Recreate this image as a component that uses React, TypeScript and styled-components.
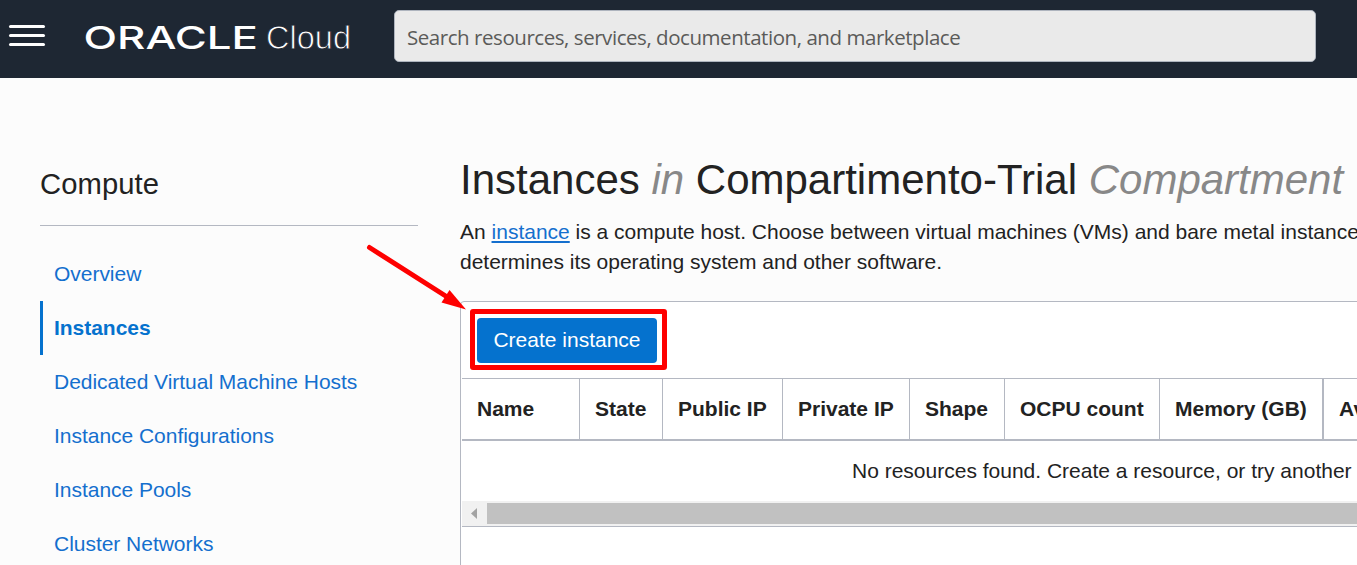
import React from "react";
import styled, { createGlobalStyle } from "styled-components";

const GlobalStyle = createGlobalStyle`
  * { box-sizing: border-box; }
  html, body { margin: 0; height: 100%; overflow: hidden; }
  body {
    background: #fcfcfc;
    color: #222;
    font: 21px/30px "Liberation Sans", Arial, sans-serif;
    white-space: nowrap;
  }
`;

const Page = styled.div`
  position: relative;
  height: 565px;
  overflow: hidden;
`;

const Header = styled.header`
  display: flex;
  align-items: flex-start;
  height: 78px;
  background: #1e2733;
`;

const MenuButton = styled.button`
  display: flex;
  flex-direction: column;
  gap: 6px;
  width: 36px;
  margin: 25px 0 0 9px;
  padding: 0;
  border: 0;
  background: none;
`;

const MenuBar = styled.span`
  height: 3px;
  width: 36px;
  border-radius: 1.5px;
  background: #fff;
`;

const Logo = styled.svg`
  display: block;
  width: 280px;
  height: 60px;
  margin: 0 34px 0 35px;
  fill: #fff;
`;

const Search = styled.div`
  display: flex;
  align-items: center;
  width: 922px;
  height: 52px;
  margin-top: 10px;
  padding: 2px 13px 0 12px;
  border: 1px solid #aeb4be;
  border-radius: 5px;
  background: #eaeaea;
  color: #5b5b59;
  font-family: "Open Sans", "Noto Sans", sans-serif;
  font-size: 20.5px;
`;

const SearchText = styled.span`
  letter-spacing: -0.45px;
`;

const Body = styled.div`
  display: flex;
  height: 487px;
`;

const Sidebar = styled.aside`
  flex: none;
  width: 378px;
  margin-left: 40px;
`;

const SidebarTitle = styled.h2`
  height: 148px;
  margin: 0 0 21px;
  padding-top: 90px;
  border-bottom: 1px solid #b4b8c2;
  font-size: 29.2px;
  line-height: 32px;
  font-weight: 400;
  letter-spacing: 0.1px;
`;

const NavItem = styled.a<{ $active?: boolean }>`
  display: block;
  height: 54px;
  padding-left: 11px;
  border-left: 3px solid ${(p) => (p.$active ? "#0572ce" : "transparent")};
  color: ${(p) => (p.$active ? "#0572ce" : "#146fce")};
  font-weight: ${(p) => (p.$active ? 700 : 400)};
  line-height: 54px;
  letter-spacing: -0.03px;
`;

const Main = styled.main`
  flex: none;
  width: 1400px;
  margin-left: 42px;
`;

const Title = styled.h1`
  margin: 0;
  padding-top: 77px;
  font-size: 42px;
  line-height: 50px;
  font-weight: 400;

  em { color: #888; }
`;

const Intro = styled.p`
  margin: 12px 0 24px;
`;

const TextLink = styled.a`
  color: #146fce;
  text-decoration: underline;
  text-decoration-thickness: 2px;
  text-underline-offset: 2px;
`;

const Panel = styled.section`
  height: 320px;
  padding-left: 1px;
  border: 1px solid #b4b8c2;
  border-radius: 4px;
  background: #fff;
`;

const Toolbar = styled.div`
  display: flex;
  height: 76px;
  padding: 7px 0 0 8px;
`;

const Highlight = styled.div`
  display: flex;
  width: 197px;
  height: 61px;
  padding: 4px 0 0 2px;
  border: 5px solid #fe0000;
  border-radius: 3px;
`;

const CreateButton = styled.button`
  width: 180px;
  height: 45px;
  padding: 0 0 2px;
  border: 0;
  border-radius: 4px;
  background: #0572ce;
  color: #fff;
  font: inherit;
`;

const Columns = styled.div`
  display: flex;
  height: 63px;
  border-top: 1px solid #b4b8c2;
  border-bottom: 2px solid #b4b8c2;
`;

const Column = styled.div<{ $width: number; $rule?: number }>`
  flex: none;
  width: ${(p) => p.$width}px;
  padding-left: 15px;
  border-right: ${(p) => p.$rule ?? 1}px solid #b4b8c2;
  font-weight: 700;
  line-height: 60px;
`;

const EmptyRow = styled.div`
  height: 60px;
  padding-left: 390px;
  line-height: 60px;
`;

const ScrollTrack = styled.div`
  display: flex;
  align-items: center;
  height: 26px;
  border-bottom: 1px solid #b4b8c2;
  background: #f1f1f1;
`;

const ScrollArrow = styled.svg`
  width: 25px;
  height: 25px;
  fill: #a3a3a3;
`;

const ScrollThumb = styled.div`
  flex: 1;
  height: 21px;
  background: #c1c1c1;
`;

const Arrow = styled.svg`
  position: absolute;
  left: 360px;
  top: 240px;
  width: 110px;
  height: 75px;
`;

const links = [
  "Overview",
  "Instances",
  "Dedicated Virtual Machine Hosts",
  "Instance Configurations",
  "Instance Pools",
  "Cluster Networks",
];

const columns = [
  { label: "Name", width: 118 },
  { label: "State", width: 83 },
  { label: "Public IP", width: 120 },
  { label: "Private IP", width: 127 },
  { label: "Shape", width: 95 },
  { label: "OCPU count", width: 155 },
  { label: "Memory (GB)", width: 164, rule: 2 },
  { label: "Availability Domain", width: 300 },
];

export default function App() {
  return (
    <Page>
      <GlobalStyle />
      <Header>
        <MenuButton aria-label="Menu">
          <MenuBar />
          <MenuBar />
          <MenuBar />
        </MenuButton>
        <Logo viewBox="80 0 280 60">
          <text x="83.5" y="49" fontFamily="Inter, sans-serif" fontSize="31.5" fontWeight="500" textLength="174.5" lengthAdjust="spacingAndGlyphs">ORACLE</text>
          <text x="266" y="49" fontFamily="Liberation Sans, sans-serif" fontSize="34" textLength="85" lengthAdjust="spacingAndGlyphs" stroke="#1e2733" strokeWidth="0.9">Cloud</text>
        </Logo>
        <Search>
          <SearchText>Search resources, services, documentation, and marketplace</SearchText>
        </Search>
      </Header>
      <Body>
        <Sidebar>
          <SidebarTitle>Compute</SidebarTitle>
          {links.map((label) => (
            <NavItem key={label} $active={label === "Instances"}>{label}</NavItem>
          ))}
        </Sidebar>
        <Main>
          <Title>
            Instances <em>in</em> Compartimento-Trial <em>Compartment</em>
          </Title>
          <Intro>
            An <TextLink>instance</TextLink> is a compute host. Choose between virtual machines (VMs) and bare metal instances.
            <br />
            determines its operating system and other software.
          </Intro>
          <Panel>
            <Toolbar>
              <Highlight>
                <CreateButton>Create instance</CreateButton>
              </Highlight>
            </Toolbar>
            <Columns>
              {columns.map((c) => (
                <Column key={c.label} $width={c.width} $rule={c.rule}>{c.label}</Column>
              ))}
            </Columns>
            <EmptyRow>No resources found. Create a resource, or try another</EmptyRow>
            <ScrollTrack>
              <ScrollArrow viewBox="0 0 25 25">
                <path d="M15 7v11l-6-5.5z" />
              </ScrollArrow>
              <ScrollThumb />
            </ScrollTrack>
          </Panel>
        </Main>
      </Body>
      <Arrow viewBox="360 240 110 75">
        <path d="M369.5 247.5L448 297.5" stroke="#fe0000" strokeWidth="5" strokeLinecap="round" />
        <path d="M449.5 290L466 309.5L441.5 302.5Z" fill="#fe0000" />
      </Arrow>
    </Page>
  );
}
